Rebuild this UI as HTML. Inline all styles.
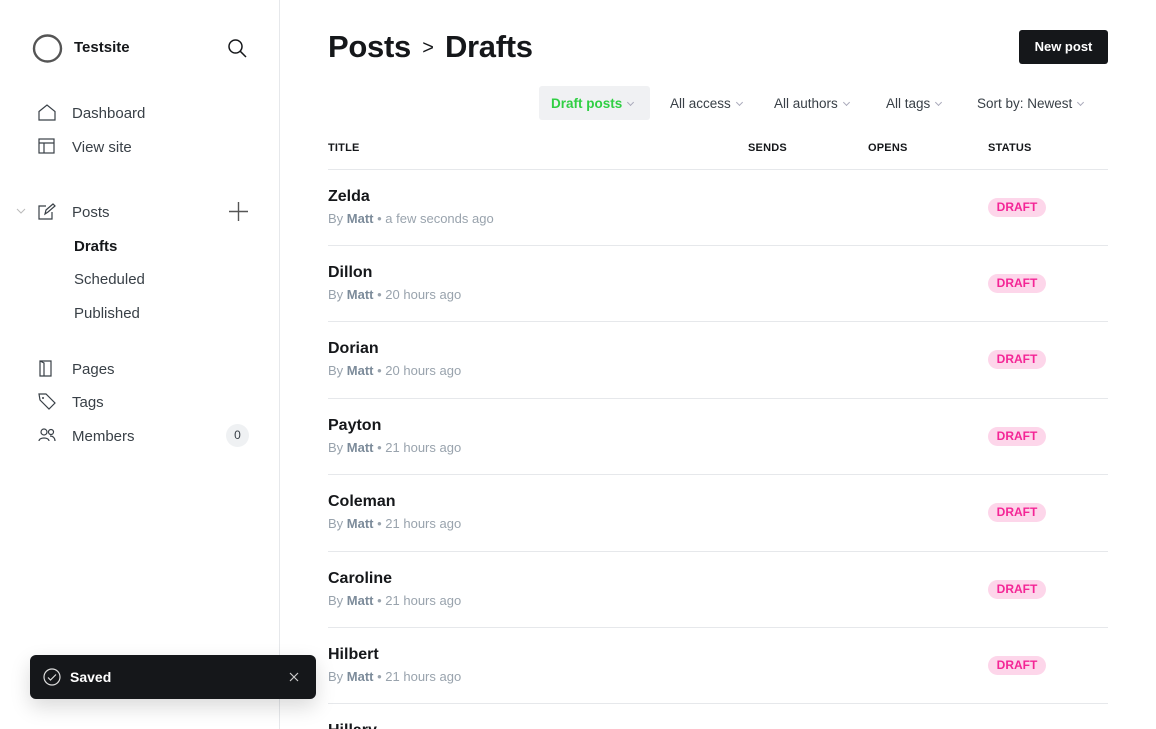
<!DOCTYPE html>
<html><head><meta charset="utf-8"><style>
*{box-sizing:border-box;margin:0;padding:0}
html,body{width:1156px;height:729px;overflow:hidden}
body{background:#fff;font-family:"Liberation Sans","DejaVu Sans",sans-serif;color:#15171a;position:relative}
.side{position:absolute;left:0;top:0;width:280px;height:729px;border-right:1px solid #e6e8eb}
.abs{position:absolute}
.nav{position:absolute;left:72px;font-size:15px;color:#394047}
.ic{position:absolute;left:38px}
.sub{position:absolute;left:74px;font-size:15px;color:#394047}
.row{position:absolute;left:328px;width:780px;height:76px;border-top:1px solid #e6e8eb}
.row .t{position:absolute;top:18px;font-size:16px;font-weight:bold}
.row .m{position:absolute;top:41px;font-size:13px;color:#99a3ad}
.row .m b{color:#7c8b9a;font-weight:bold}
.badge{position:absolute;left:660px;top:28px;width:58px;height:19px;border-radius:10px;background:#fdd6ea;color:#f42596;font-size:12px;font-weight:bold;text-align:center;line-height:19px}
.f{position:absolute;top:96px;font-size:13.5px;color:#394047}
.f:after{content:"";display:inline-block;width:4px;height:4px;border-right:1px solid #aab;border-bottom:1px solid #aab;transform:rotate(45deg);margin-left:6px;vertical-align:3px}
.h{position:absolute;top:142px;font-size:11px;font-weight:bold;letter-spacing:.2px}
</style></head><body>
<div class="side">
 <svg class="abs" style="left:32px;top:33px" width="31" height="31" viewBox="0 0 31 31"><ellipse cx="15.5" cy="15.5" rx="13.5" ry="13" fill="none" stroke="#555" stroke-width="2.4"/></svg>
 <div class="abs" style="left:74px;top:39px;font-size:15px;font-weight:bold">Testsite</div>
 <svg class="abs" style="left:227px;top:38px" width="20" height="20" viewBox="0 0 20 20"><circle cx="8.5" cy="8.5" r="6.5" fill="none" stroke="#15171a" stroke-width="1.5"/><path d="M13.3 13.3L19 19" stroke="#15171a" stroke-width="1.5"/></svg>
 <svg class="ic" style="top:104px" width="18" height="17" viewBox="0 0 18 17"><path d="M1 7.5L9 1l8 6.5V16H1z" fill="none" stroke="#394047" stroke-width="1.2"/></svg>
 <div class="nav" style="top:105px">Dashboard</div>
 <svg class="ic" style="top:138px" width="17" height="16" viewBox="0 0 17 16"><rect x="1" y="1" width="15" height="14" fill="none" stroke="#394047" stroke-width="1.2"/><path d="M1 5h15M6 5v10" stroke="#394047" stroke-width="1.2"/></svg>
 <div class="nav" style="top:139px">View site</div>
 <svg class="abs" style="left:16px;top:208px" width="10" height="6" viewBox="0 0 10 6"><path d="M1 1l4 4 4-4" fill="none" stroke="#bbb"/></svg>
 <svg class="ic" style="top:203px" width="18" height="17" viewBox="0 0 18 17"><path d="M8 3H1v13h13V9M7 11l1-4 7-6 2 2-7 6z" fill="none" stroke="#394047" stroke-width="1.2"/></svg>
 <div class="nav" style="top:204px">Posts</div>
 <svg class="abs" style="left:229px;top:202px" width="19" height="19" viewBox="0 0 19 19"><path d="M9.5 0v19M0 9.5h19" stroke="#555" stroke-width="1.4"/></svg>
 <div class="sub" style="top:238px;font-weight:bold;color:#15171a">Drafts</div>
 <div class="sub" style="top:271px">Scheduled</div>
 <div class="sub" style="top:305px">Published</div>
 <svg class="ic" style="top:360px" width="16" height="17" viewBox="0 0 16 17"><path d="M2 1h11v15H2zM2 1l4 2v13" fill="none" stroke="#394047" stroke-width="1.2"/></svg>
 <div class="nav" style="top:361px">Pages</div>
 <svg class="ic" style="top:393px" width="18" height="17" viewBox="0 0 18 17"><path d="M1 1h7l9 9-6 6-9-9z" fill="none" stroke="#394047" stroke-width="1.2"/><circle cx="5" cy="5" r="1" fill="#394047"/></svg>
 <div class="nav" style="top:394px">Tags</div>
 <svg class="ic" style="top:428px" width="18" height="14" viewBox="0 0 18 14"><circle cx="6" cy="4" r="3" fill="none" stroke="#394047" stroke-width="1.2"/><circle cx="13" cy="4" r="2.5" fill="none" stroke="#394047" stroke-width="1.2"/><path d="M1 13c0-4 10-4 10 0M12 8c3 0 5 2 5 5" fill="none" stroke="#394047" stroke-width="1.2"/></svg>
 <div class="nav" style="top:428px">Members</div>
 <div class="abs" style="left:226px;top:424px;width:23px;height:23px;border-radius:12px;background:#eff1f3;font-size:12px;text-align:center;line-height:23px;color:#394047">0</div>
</div>
<div class="abs" style="left:328px;top:29px;font-size:31px;font-weight:bold;letter-spacing:-.3px">Posts <span style="font-size:20px;font-weight:normal;vertical-align:3px;margin:0 3px">&gt;</span> Drafts</div>
<div class="abs" style="left:1019px;top:30px;width:89px;height:34px;background:#15171a;border-radius:3px;color:#fff;font-size:13px;font-weight:bold;text-align:center;line-height:34px">New post</div>
<div class="abs" style="left:539px;top:86px;width:111px;height:34px;background:#f0f1f3;border-radius:3px"></div>
<div class="f" style="left:551px;color:#30cf43;font-weight:bold">Draft posts</div>
<div class="f" style="left:670px">All access</div>
<div class="f" style="left:774px">All authors</div>
<div class="f" style="left:886px">All tags</div>
<div class="f" style="left:977px">Sort by: Newest</div>
<div class="h" style="left:328px">TITLE</div>
<div class="h" style="left:748px">SENDS</div>
<div class="h" style="left:868px">OPENS</div>
<div class="h" style="left:988px">STATUS</div>
<div class="row" style="top:169px"><div class="t">Zelda</div><div class="m">By <b>Matt</b> • a few seconds ago</div><div class="badge">DRAFT</div></div>
<div class="row" style="top:245px"><div class="t">Dillon</div><div class="m">By <b>Matt</b> • 20 hours ago</div><div class="badge">DRAFT</div></div>
<div class="row" style="top:321px"><div class="t">Dorian</div><div class="m">By <b>Matt</b> • 20 hours ago</div><div class="badge">DRAFT</div></div>
<div class="row" style="top:398px"><div class="t">Payton</div><div class="m">By <b>Matt</b> • 21 hours ago</div><div class="badge">DRAFT</div></div>
<div class="row" style="top:474px"><div class="t">Coleman</div><div class="m">By <b>Matt</b> • 21 hours ago</div><div class="badge">DRAFT</div></div>
<div class="row" style="top:551px"><div class="t">Caroline</div><div class="m">By <b>Matt</b> • 21 hours ago</div><div class="badge">DRAFT</div></div>
<div class="row" style="top:627px"><div class="t">Hilbert</div><div class="m">By <b>Matt</b> • 21 hours ago</div><div class="badge">DRAFT</div></div>
<div class="row" style="top:703px"><div class="t">Hillary</div></div>
<div class="abs" style="left:30px;top:655px;width:286px;height:44px;background:#15171a;border-radius:6px;box-shadow:0 8px 20px rgba(0,0,0,.15)">
 <svg class="abs" style="left:13px;top:13px" width="18" height="18" viewBox="0 0 18 18"><circle cx="9" cy="9" r="8" fill="none" stroke="#ddd" stroke-width="1.2"/><path d="M5 9.5l2.5 2.5L13 6.5" fill="none" stroke="#ddd" stroke-width="1.2"/></svg>
 <div class="abs" style="left:40px;top:14px;color:#fff;font-size:14px;font-weight:bold">Saved</div>
 <svg class="abs" style="left:259px;top:17px" width="10" height="10" viewBox="0 0 10 10"><path d="M1 1l8 8M9 1l-8 8" stroke="#ccc" stroke-width="1.2"/></svg>
</div>
</body></html>
